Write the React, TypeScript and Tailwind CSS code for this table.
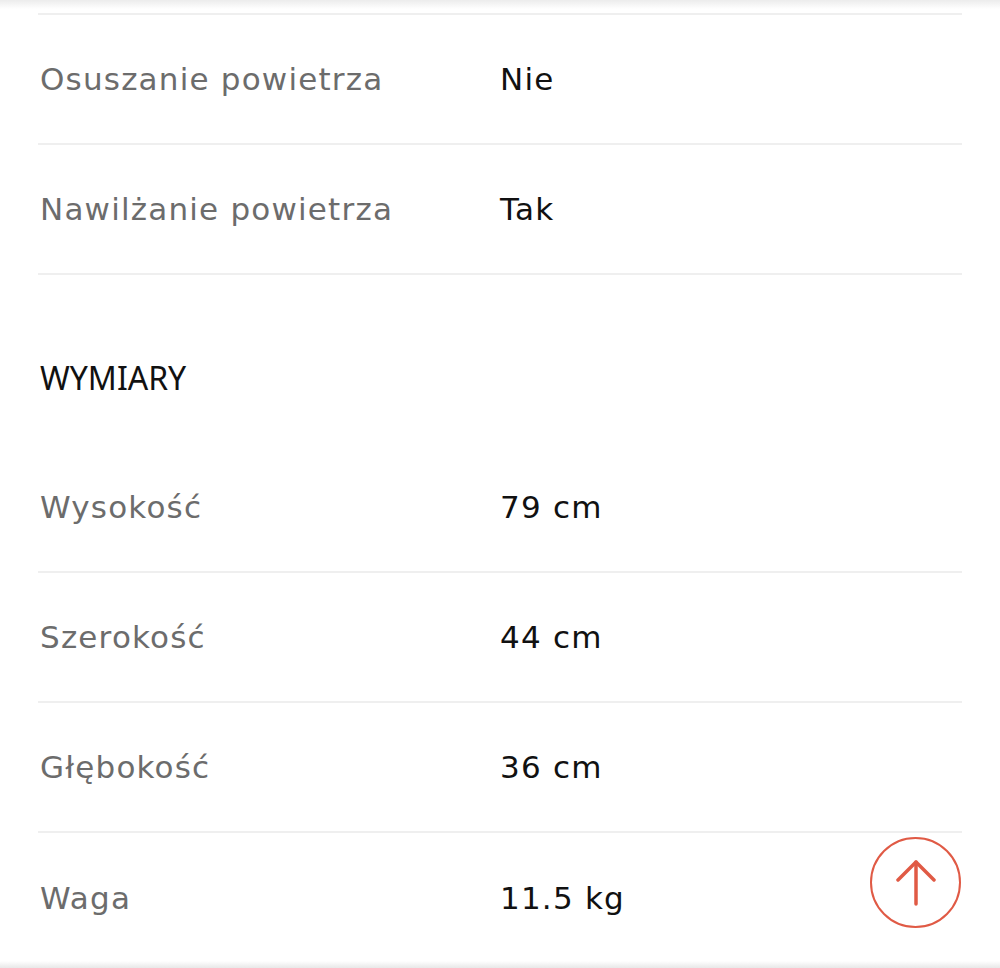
import React from 'react';

type Spec = { label: string; value: string };

const top: Spec[] = [
  { label: 'Osuszanie powietrza', value: 'Nie' },
  { label: 'Nawilżanie powietrza', value: 'Tak' },
];

const dims: Spec[] = [
  { label: 'Wysokość', value: '79 cm' },
  { label: 'Szerokość', value: '44 cm' },
  { label: 'Głębokość', value: '36 cm' },
];

const font = { fontFamily: '"DejaVu Sans", "Noto Sans", sans-serif' };

const Row: React.FC<{ spec: Spec; last?: boolean }> = ({ spec, last }) => (
  <div className={`flex items-center h-[130px] ${last ? '' : 'border-b-2 border-[#efefef]'}`}>
    <div className="w-[462px] pl-[2px] text-[31px] text-[#6c6c6c] tracking-[1.2px]">{spec.label}</div>
    <div className="text-[31px] text-[#111111] tracking-[1.2px]">{spec.value}</div>
  </div>
);

export default function App() {
  return (
    <div className="relative w-[1000px] h-[968px] bg-white overflow-hidden" style={font}>
      <div className="h-[9px] bg-gradient-to-b from-[#ececec] to-white" />
      <div className="mx-[38px]">
        <div className="h-[6px] border-b-2 border-[#efefef]" />
        {top.map((s) => (
          <Row key={s.label} spec={s} />
        ))}
        <div className="h-[168px] pt-[83px]">
          <h3
            className="pl-[2px] text-[32px] leading-[40px] text-[#111111]"
            style={{ fontFamily: '"Noto Sans", Inter, sans-serif' }}
          >
            WYMIARY
          </h3>
        </div>
        {dims.map((s) => (
          <Row key={s.label} spec={s} />
        ))}
        <Row spec={{ label: 'Waga', value: '11.5 kg' }} last />
      </div>
      <div className="absolute left-0 right-0 bottom-0 h-[7px] bg-gradient-to-b from-white to-[#e8e8e8]" />
      <button className="absolute left-[870px] top-[837px] w-[91px] h-[91px] rounded-full border-2 border-[#e05a45] bg-white flex items-center justify-center">
        <svg width="40" height="48" viewBox="0 0 40 48" fill="none" stroke="#e05a45" strokeWidth="3.5" strokeLinecap="round" strokeLinejoin="round">
          <path d="M20 45V3" />
          <path d="M2 21L20 3L38 21" />
        </svg>
      </button>
    </div>
  );
}
